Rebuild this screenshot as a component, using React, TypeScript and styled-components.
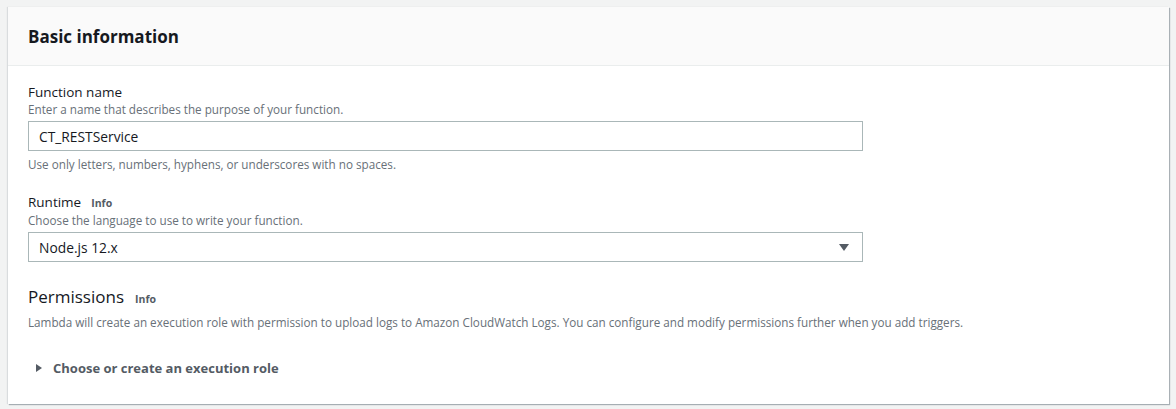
import styled, { createGlobalStyle } from "styled-components";

const GlobalStyle = createGlobalStyle`
    html, body {
        margin: 0;
        padding: 0;
        background: #f2f3f3;
        font-family: "Open Sans", "Noto Sans", Arial, sans-serif;
        color: #16191f;
    }
`;

const Page = styled.div`
    width: 1176px;
    height: 409px;
    padding: 7px 7px 0 8px;
    box-sizing: border-box;
`;

const Card = styled.section`
    background: #fff;
    box-shadow: 1px 1px 1px 0 rgba(0, 22, 40, 0.3), -1px 0 1px 0 rgba(0, 22, 40, 0.1);
    height: 397px;
    display: flex;
    flex-direction: column;
`;

const CardHeader = styled.header`
    height: 59px;
    background: #fafafa;
    border-bottom: 1px solid #eaeded;
    padding: 0 20px;
    display: flex;
    align-items: center;
    box-sizing: border-box;
`;

const Title = styled.h2`
    margin: 0;
    font-size: 17px;
    font-weight: 700;
    color: #16191f;
`;

const Body = styled.div`
    padding: 17px 20px 0 20px;
    display: flex;
    flex-direction: column;
`;

const Field = styled.div<{ $gap?: number }>`
    display: flex;
    flex-direction: column;
    margin-bottom: ${(p) => p.$gap ?? 0}px;
`;

const Label = styled.div`
    display: flex;
    align-items: baseline;
    gap: 10px;
    font-size: 13.5px;
    line-height: 18px;
    color: #16191f;
`;

const Heading = styled.div`
    display: flex;
    align-items: baseline;
    gap: 11px;
    font-size: 17px;
    line-height: 22px;
    color: #16191f;
`;

const InfoLink = styled.span`
    font-size: 10.5px;
    font-weight: 700;
    color: #545b64;
`;

const Description = styled.div<{ $top?: number }>`
    font-size: 11.7px;
    line-height: 16px;
    margin-top: ${(p) => p.$top ?? 0}px;
    color: #687078;
`;

const Control = styled.div`
    width: 835px;
    height: 30px;
    margin-top: 4px;
    border: 1px solid #aab7b8;
    box-sizing: border-box;
    display: flex;
    align-items: center;
    justify-content: space-between;
    padding: 0 13px 0 10px;
    font-size: 13.8px;
    color: #16191f;
`;

const Caret = styled.span`
    width: 0;
    height: 0;
    border-left: 5px solid transparent;
    border-right: 5px solid transparent;
    border-top: 7px solid #545b64;
`;

const Expander = styled.div`
    margin-top: 29px;
    display: flex;
    align-items: center;
    gap: 11px;
    padding-left: 8px;
    font-size: 13px;
    font-weight: 700;
    color: #545b64;
`;

const Arrow = styled.span`
    width: 0;
    height: 0;
    border-top: 4.5px solid transparent;
    border-bottom: 4.5px solid transparent;
    border-left: 6px solid #545b64;
`;

export default function App() {
    return (
        <>
            <GlobalStyle />
            <Page>
                <Card>
                    <CardHeader>
                        <Title>Basic information</Title>
                    </CardHeader>
                    <Body>
                        <Field $gap={21}>
                            <Label>Function name</Label>
                            <Description>Enter a name that describes the purpose of your function.</Description>
                            <Control>CT_RESTService</Control>
                            <Description $top={5}>
                                Use only letters, numbers, hyphens, or underscores with no spaces.
                            </Description>
                        </Field>
                        <Field $gap={24}>
                            <Label>
                                Runtime <InfoLink>Info</InfoLink>
                            </Label>
                            <Description>Choose the language to use to write your function.</Description>
                            <Control>
                                Node.js 12.x
                                <Caret />
                            </Control>
                        </Field>
                        <Field>
                            <Heading>
                                Permissions <InfoLink>Info</InfoLink>
                            </Heading>
                            <Description $top={4}>
                                Lambda will create an execution role with permission to upload logs to Amazon CloudWatch Logs. You can configure and modify permissions further when you add triggers.
                            </Description>
                        </Field>
                        <Expander>
                            <Arrow />
                            Choose or create an execution role
                        </Expander>
                    </Body>
                </Card>
            </Page>
        </>
    );
}
